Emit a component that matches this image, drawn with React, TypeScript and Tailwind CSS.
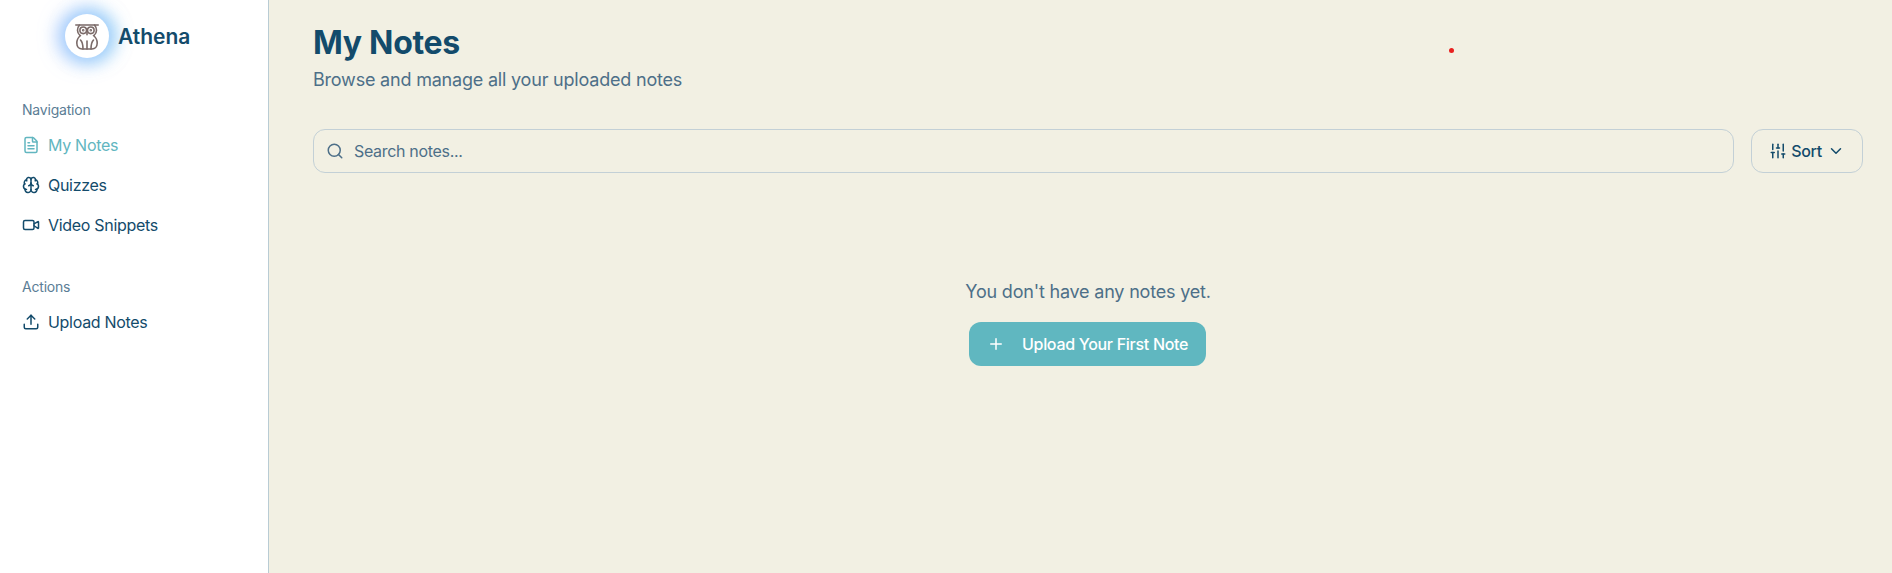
import { FileText, Brain, Video, Upload, Search, SlidersVertical, ChevronDown, Plus } from "lucide-react";

function Owl() {
  return (
    <svg width="24" height="27" viewBox="0 0 24 27" fill="none" stroke="#7a6a68" strokeWidth="1.6" strokeLinecap="round" strokeLinejoin="round">
      <path d="M0.800 2h22.400" />
      <path d="M4.500 2C3 3.800 2.500 5.500 2.500 7.200c0 2.300 1 4 2.500 5.300" />
      <path d="M19.500 2C21 3.800 21.500 5.500 21.500 7.200c0 2.300-1 4-2.500 5.300" />
      <circle cx="8.200" cy="7.300" r="3.300" />
      <circle cx="15.800" cy="7.300" r="3.300" />
      <circle cx="8.200" cy="7.300" r="0.500" />
      <circle cx="15.800" cy="7.300" r="0.500" />
      <path d="M12 9.800v2" />
      <path d="M5.500 12.500C3 14.500 1.800 17.500 1.800 20c0 3.800 2.400 6 5.200 6h10c2.800 0 5.200-2.200 5.200-6 0-2.500-1.200-5.500-3.700-7.500" />
      <path d="M8 26c0-4-0.500-7-2.500-9" />
      <path d="M16 26c0-4 0.500-7 2.500-9" />
      <path d="M12 18v8" />
    </svg>
  );
}

function NavItem({ icon, label, active }: { icon: React.ReactNode; label: string; active?: boolean }) {
  return (
    <div className={`flex h-10 items-center gap-2 px-[22px] text-[16px] tracking-[-0.3px] ${active ? "text-[#62b6c0]" : "text-[#134b6b]"}`}>
      {icon}
      <span>{label}</span>
    </div>
  );
}

export default function App() {
  return (
    <div className="relative flex h-[573px] w-full overflow-hidden bg-[#f2f0e3] font-['Inter',sans-serif]">
      <aside className="flex w-[269px] shrink-0 flex-col border-r border-[#b9ccd4] bg-white">
        <div className="flex h-[72px] items-center gap-[9px] pl-[65px]">
          <div className="flex h-11 w-11 items-center justify-center rounded-full bg-white shadow-[-2px_0_18px_6px_rgba(120,170,255,0.55),4px_0_16px_4px_rgba(130,215,240,0.5)]">
            <Owl />
          </div>
          <span className="pt-[1px] text-[21px] font-semibold leading-7 text-[#134b6b]">Athena</span>
        </div>
        <div className="mt-[28px]">
          <div className="px-[22px] text-[14px] leading-5 tracking-[-0.2px] text-[#5b7d95]">Navigation</div>
          <div className="mt-[5px]">
            <NavItem active label="My Notes" icon={<FileText size={18} strokeWidth={2} />} />
            <NavItem label="Quizzes" icon={<Brain size={18} strokeWidth={2} />} />
            <NavItem label="Video Snippets" icon={<Video size={18} strokeWidth={2} />} />
          </div>
        </div>
        <div className="mt-[32px]">
          <div className="px-[22px] text-[14px] leading-5 tracking-[-0.2px] text-[#5b7d95]">Actions</div>
          <div className="mt-[5px]">
            <NavItem label="Upload Notes" icon={<Upload size={18} strokeWidth={2} />} />
          </div>
        </div>
      </aside>
      <main className="flex min-w-0 flex-1 flex-col pl-[44px] pr-[29px] pt-[22px]">
        <h1 className="text-[32px] font-bold leading-[42px] tracking-[-0.3px] text-[#134b6b]">My Notes</h1>
        <p className="mt-[2px] text-[18px] leading-7 tracking-[-0.2px] text-[#4d6f88]">Browse and manage all your uploaded notes</p>
        <div className="mt-[35px] flex gap-[17px]">
          <div className="flex h-11 flex-1 items-center gap-[10px] rounded-xl border border-[#c3d0d6] pl-[12px] text-[16px] tracking-[-0.32px] text-[#4d6f88]">
            <Search size={18} strokeWidth={2} />
            <span>Search notes...</span>
          </div>
          <div className="flex h-11 w-[112px] items-center justify-center gap-[4px] rounded-xl border border-[#c3d0d6] text-[16px] font-medium tracking-[-0.3px] text-[#134b6b]">
            <SlidersVertical size={18} strokeWidth={2} />
            <span>Sort</span>
            <ChevronDown size={18} strokeWidth={2} className="ml-[1px]" />
          </div>
        </div>
        <div className="mt-[105px] flex flex-col items-center">
          <p className="text-[18px] leading-7 tracking-[-0.2px] text-[#4d6f88]">You don't have any notes yet.</p>
          <div className="mt-[16px] -ml-[1px] flex h-11 w-[237px] items-center gap-[17px] rounded-xl bg-[#60b7c0] pl-[18px] text-[16px] font-medium tracking-[-0.3px] text-white">
            <Plus size={18} strokeWidth={2} />
            <span>Upload Your First Note</span>
          </div>
        </div>
      </main>
      <div className="absolute left-[1448.500px] top-[47.500px] h-[5px] w-[5px] rounded-full bg-[#e8201f]" />
    </div>
  );
}
